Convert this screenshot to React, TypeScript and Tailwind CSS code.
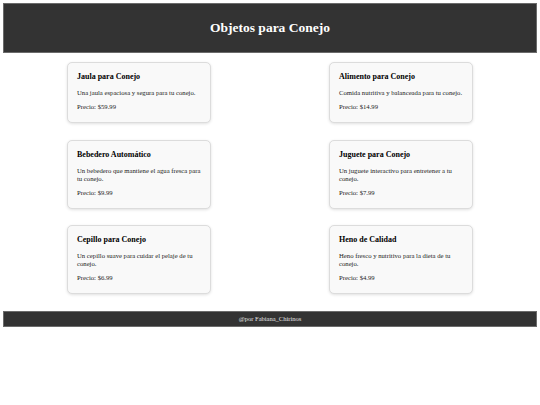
const products = [
  { name: 'Jaula para Conejo', description: 'Una jaula espaciosa y segura para tu conejo.', price: '$59.99' },
  { name: 'Alimento para Conejo', description: 'Comida nutritiva y balanceada para tu conejo.', price: '$14.99' },
  { name: 'Bebedero Automático', description: 'Un bebedero que mantiene el agua fresca para tu conejo.', price: '$9.99' },
  { name: 'Juguete para Conejo', description: 'Un juguete interactivo para entretener a tu conejo.', price: '$7.99' },
  { name: 'Cepillo para Conejo', description: 'Un cepillo suave para cuidar el pelaje de tu conejo.', price: '$6.99' },
  { name: 'Heno de Calidad', description: 'Heno fresco y nutritivo para la dieta de tu conejo.', price: '$4.99' },
];

function ProductCard({ name, description, price }: { name: string; description: string; price: string }) {
  return (
    <div className="w-[144px] rounded-[5px] border border-[#dcdcdc] bg-[#f9f9f9] pt-[8px] pb-[11px] pl-[9px] pr-[9px] shadow-[0_1px_3px_rgba(0,0,0,0.12)]">
      <h3 className="text-[8px] font-bold leading-[12px] text-black">{name}</h3>
      <p className="mt-[6px] text-[6.7px] leading-[8px] text-[#222]">{description}</p>
      <p className="mt-[6px] text-[6.7px] leading-[8px] text-[#222]">Precio: {price}</p>
    </div>
  );
}

export default function App() {
  return (
    <div className="min-h-[405px] bg-white p-[3px] font-['Liberation_Serif',serif]">
      <header className="flex h-[50px] items-center justify-center border border-[#6b6b6b] bg-[#333333]">
        <h1 className="text-[13.5px] font-bold text-white">Objetos para Conejo</h1>
      </header>

      {/* Product grid */}
      <main className="grid grid-cols-[144px_144px] justify-between gap-y-[16.5px] px-[64px] pt-[9px] pb-[17px]">
        {products.map(p => (
          <ProductCard key={p.name} {...p} />
        ))}
      </main>

      <footer className="flex h-[16px] items-center justify-center border border-[#6b6b6b] bg-[#333333]">
        <span className="text-[6.5px] text-[#e5e5e5]">@por Fabiana_Chirinos</span>
      </footer>
    </div>
  );
}
